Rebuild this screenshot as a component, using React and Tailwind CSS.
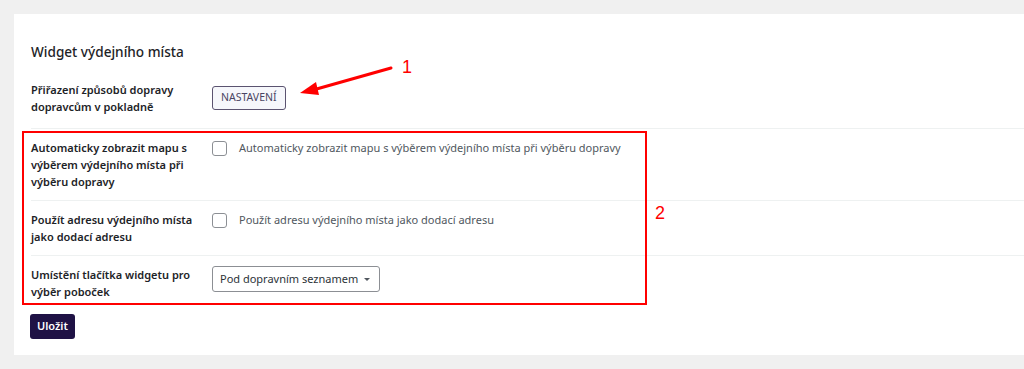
const Row = ({ label, children, last }) => (
    <div className={`flex py-[10px] ${last ? '' : 'border-b border-[#eef1f1]'}`}>
        <div className="w-[181px] shrink-0 pr-3 text-[11px] leading-[17px] font-semibold text-[#1d2327]">
            {label}
        </div>
        <div className="flex-1">{children}</div>
    </div>
);

const Check = ({ text }) => (
    <label className="flex items-start gap-[12px] text-[11px] leading-[17px] text-[#50575e]">
        <span className="mt-[2px] w-[15px] h-[15px] rounded-[3px] border border-[#8c8f94] bg-white shrink-0"></span>
        <span>{text}</span>
    </label>
);

export default function App() {
    return (
        <div className="relative h-[369px] bg-[#f0f0f0] pt-[14px] pl-[14px] font-['Noto_Sans','Open_Sans',sans-serif]">
            <div className="h-[341px] bg-white pl-[17px] pt-[28px]">
                <h2 className="text-[13.6px] leading-[20px] font-medium text-[#1d2327] mb-[19px]">Widget výdejního místa</h2>

                <div className="flex pt-[0px] pb-[13px] border-b border-[#eef1f1]">
                    <div className="w-[181px] shrink-0 pr-3 text-[11px] leading-[17px] font-semibold text-[#1d2327]">
                        Přiřazení způsobů dopravy dopravcům v pokladně
                    </div>
                    <div className="pt-[2px]">
                        <button className="h-[24px] px-[8px] rounded-[3px] border border-[#5b5370] bg-[#f6f7fb] text-[10.5px] text-[#4a4563]">
                            NASTAVENÍ
                        </button>
                    </div>
                </div>

                <Row label="Automaticky zobrazit mapu s výběrem výdejního místa při výběru dopravy">
                    <Check text="Automaticky zobrazit mapu s výběrem výdejního místa při výběru dopravy" />
                </Row>
                <Row label="Použít adresu výdejního místa jako dodací adresu">
                    <Check text="Použít adresu výdejního místa jako dodací adresu" />
                </Row>
                <Row label="Umístění tlačítka widgetu pro výběr poboček" last>
                    <div className="w-[168px] h-[26px] flex items-center justify-between pl-[7px] pr-[9px] rounded-[3px] border border-[#8c8f94] text-[11px] text-[#2c3338]">
                        <span>Pod dopravním seznamem</span>
                        <span className="w-0 h-0 border-l-[3px] border-r-[3px] border-t-[3px] border-l-transparent border-r-transparent border-t-[#50575e]"></span>
                    </div>
                </Row>

                <button className="mt-[4px] -ml-[1px] h-[25px] px-[7px] rounded-[3px] bg-[#1f1245] text-white text-[11px] font-semibold">
                    Uložit
                </button>
            </div>

            {/* annotations */}
            <div className="absolute left-[22px] top-[131px] w-[625px] h-[174px] border-2 border-[#f00]"></div>
            <svg className="absolute left-[295px] top-[60px]" width="100" height="40" viewBox="0 0 100 40">
                <line x1="96" y1="8" x2="18" y2="30" stroke="#f00" strokeWidth="3" strokeLinecap="round" />
                <polygon points="5,33 21,22 24,35" fill="#f00" />
            </svg>
            <span className="absolute left-[402px] top-[56px] text-[18px] leading-[22px] text-[#f00] font-['Liberation_Sans',sans-serif]">1</span>
            <span className="absolute left-[655px] top-[202px] text-[18px] leading-[22px] text-[#f00] font-['Liberation_Sans',sans-serif]">2</span>
        </div>
    );
}
